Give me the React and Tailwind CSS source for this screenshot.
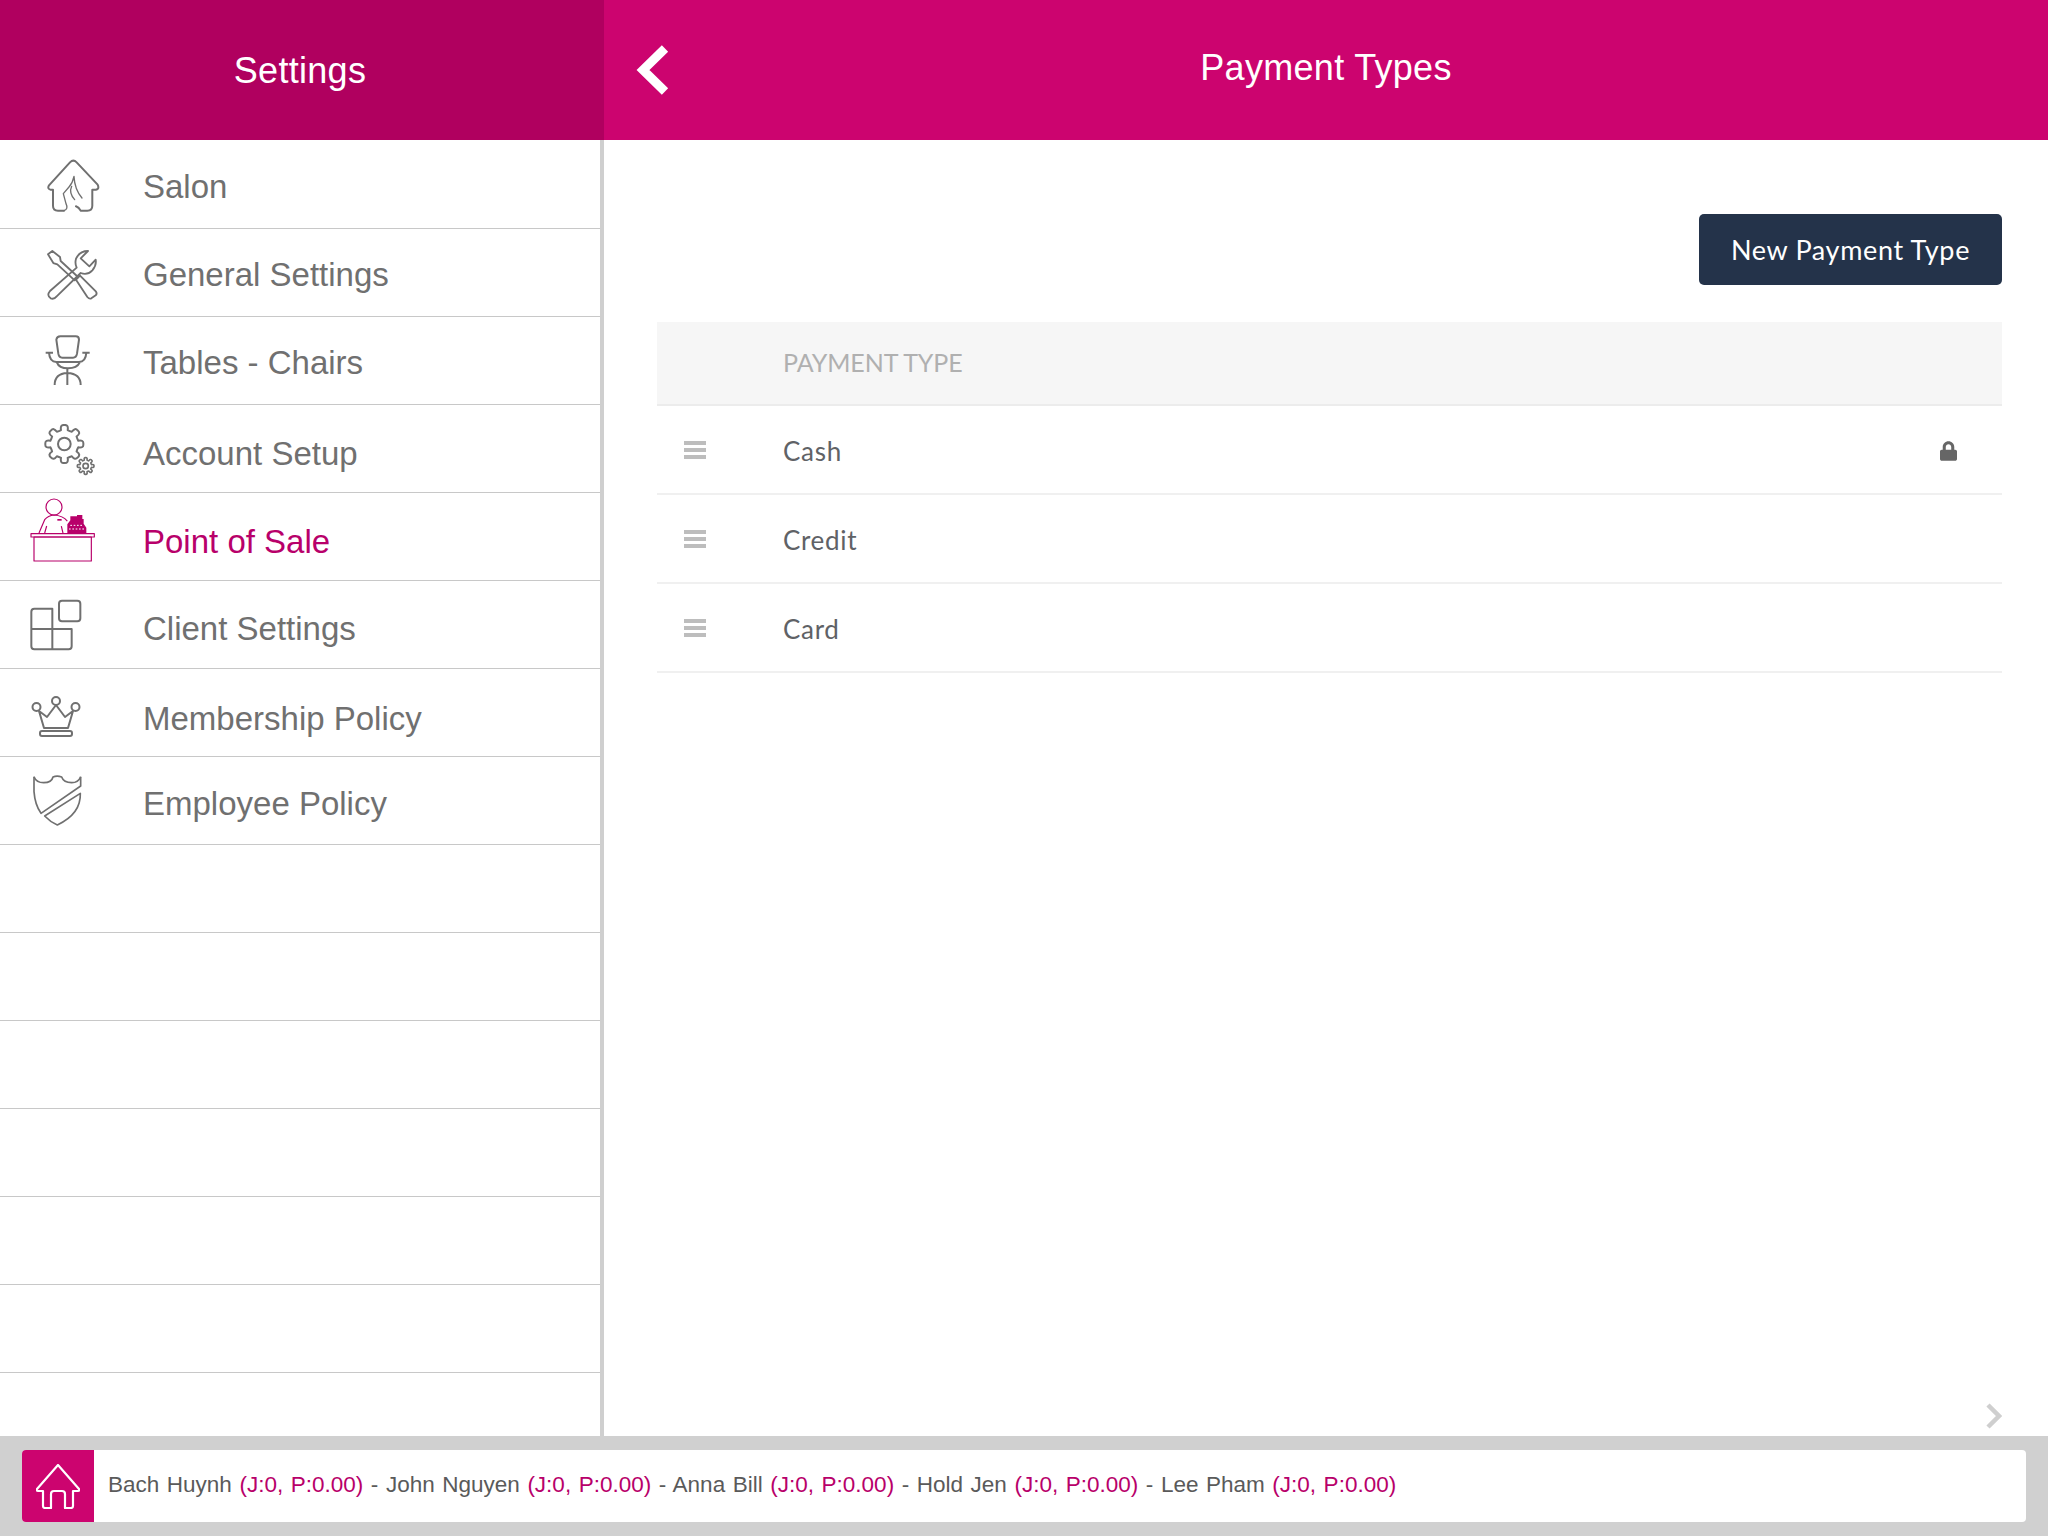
import React from "react";
import { FaLock } from "react-icons/fa";

function gearPath(cx, cy, ro, ri, teeth) {
  const step = (Math.PI * 2) / teeth;
  const pt = (i, r, t) => {
    const a = i * step - Math.PI / 2 + t * step;
    return `${(cx + r * Math.cos(a)).toFixed(1)} ${(cy + r * Math.sin(a)).toFixed(1)}`;
  };
  let d = `M${pt(0, ri, -0.3)}`;
  for (let i = 0; i < teeth; i++) {
    d += ` Q${pt(i, ro * 1.05, -0.28)} ${pt(i, ro, 0)}`;
    d += ` Q${pt(i, ro * 1.05, 0.28)} ${pt(i, ri, 0.3)}`;
    d += ` Q${pt(i, ri * 0.97, 0.5)} ${pt(i, ri, 0.7)}`;
  }
  return d + "Z";
}

const G = "#707070";
const P = "#b8006a";

const SalonIcon = () => (
  <svg viewBox="130 85 175 165" className="block w-[58.3px] h-[55px] ml-[44px] mt-[17.3px]" fill="none" stroke={G} strokeWidth="6" strokeLinejoin="round" strokeLinecap="round">
    <path d="M190 243H172Q157 243 157 228V180H150Q139 178 145 167L208 98Q218 88 228 98L291 165Q297 178 286 180H275V228Q275 243 260 243H240Q235 233 226 230" />
    <path d="M190 243Q204 238 196 222L188 192L205 172Q216 160 220 140Q222 180 244 205" strokeWidth="4" />
    <path d="M213 170Q204 190 222 210" strokeWidth="4" />
  </svg>
);
const ToolsIcon = () => (
  <svg viewBox="130 350 170 170" className="block w-[56.7px] h-[56.7px] ml-[44px] mt-[17.7px]" fill="none" stroke={G} strokeWidth="5.5" strokeLinejoin="round">
    <path d="M142 372L155 362L178 380L180 392L232 440L222 450L170 402L158 398Z" />
    <path d="M226 448L238 436L286 484Q290 490 285 495L272 504Q266 507 260 500Z" />
    <path d="M262 362Q237 362 226 385Q222 400 228 412L148 482Q137 495 150 504Q160 508 168 498L240 428Q260 436 275 420Q288 405 285 388L266 408L240 384Z" />
  </svg>
);
const ChairIcon = () => (
  <svg viewBox="130 605 150 170" className="block w-[50px] h-[56.7px] ml-[43.3px] mt-[14.7px]" fill="none" stroke={G} strokeWidth="6" strokeLinejoin="round">
    <path d="M170 628Q172 618 182 618H228Q238 618 238 628L232 670Q230 682 220 682H188Q178 682 176 670Z" />
    <path d="M138 667H160M248 667H270" />
    <path d="M148 667Q150 695 170 695H238Q258 695 260 667" />
    <path d="M172 697Q178 714 205 714Q232 714 240 697" />
    <path d="M203 714V764M165 764Q165 730 203 728Q243 730 243 764" />
  </svg>
);
const GearIcon = () => (
  <svg viewBox="125 -20 165 160" className="block w-[55px] h-[53.3px] ml-[41.7px] mt-[18.8px]" fill="none" stroke={G} strokeWidth="6" strokeLinejoin="round">
    <path d={gearPath(192, 40, 57, 43, 8)} />
    <circle cx="192" cy="40" r="19" />
    <path d={gearPath(256, 106, 25, 18, 8)} strokeWidth="5" />
    <circle cx="256" cy="106" r="8" strokeWidth="5" />
  </svg>
);
const PosIcon = () => (
  <svg viewBox="85 200 210 200" className="block w-[70px] h-[66.7px] ml-[28.3px] mt-[3.7px]" fill="none" stroke={P} strokeWidth="3.5" strokeLinejoin="round">
    <circle cx="163" cy="230" r="24" />
    <path d="M118 308L135 268Q145 256 163 254Q190 256 203 272" />
    <path d="M135 308L141 287M190 308L185 287" />
    <path d="M173 266H186V271H173Z" fill={P} stroke="none" />
    <path d="M203 310V282L212 270V258H232V254H248V266H252V280L260 292V310Z" fill={P} stroke="none" />
    <path d="M212 285H250M208 296H256" stroke="#ffffff" strokeWidth="3" strokeDasharray="5 5" />
    <rect x="94" y="310" width="190" height="10" />
    <rect x="103" y="320" width="172" height="72" />
  </svg>
);
const ClientIcon = () => (
  <svg viewBox="85 505 165 165" className="block w-[55px] h-[55px] ml-[28.3px] mt-[17.3px]" fill="none" stroke={G} strokeWidth="6" strokeLinejoin="round">
    <path d="M158 537H104Q95 537 95 546V598H158ZM95 598V650Q95 659 104 659H207Q216 659 216 650V598H158V659" />
    <rect x="178" y="513" width="64" height="62" rx="9" />
  </svg>
);
const CrownIcon = () => (
  <svg viewBox="30 695 52 45" className="block w-[52px] h-[45px] ml-[30px] mt-[26px]" fill="none" stroke={G} strokeWidth="2" strokeLinejoin="round">
    <circle cx="36.5" cy="707" r="4" />
    <circle cx="56" cy="701" r="4" />
    <circle cx="75.5" cy="707" r="4" />
    <path d="M39 711L44 728H68L73 711L65 717L56 705L47 717Z" />
    <rect x="40" y="731" width="32" height="5" rx="2" />
  </svg>
);
const ShieldIcon = () => (
  <svg viewBox="95 135 150 155" className="block w-[50px] h-[51.7px] ml-[31.7px] mt-[18px]" fill="none" stroke={G} strokeWidth="5" strokeLinejoin="round">
    <path d="M101 140Q108 158 130 158Q154 158 158 141Q170 136 184 141Q190 158 214 158Q234 158 241 140" />
    <path d="M101 140V185Q104 225 122 250L241 168V140" />
    <path d="M133 258L240 190Q242 252 171 285Q150 276 133 258Z" />
  </svg>
);

const menu = [
  { label: "Salon", Icon: SalonIcon, cls: "mt-[27px] text-[#707070]" },
  { label: "General Settings", Icon: ToolsIcon, cls: "mt-[27px] text-[#707070]" },
  { label: "Tables - Chairs", Icon: ChairIcon, cls: "mt-[27px] text-[#707070]" },
  { label: "Account Setup", Icon: GearIcon, cls: "mt-[30px] text-[#707070]" },
  { label: "Point of Sale", Icon: PosIcon, cls: "mt-[30px] text-[#b8006a]" },
  { label: "Client Settings", Icon: ClientIcon, cls: "mt-[29px] text-[#707070]" },
  { label: "Membership Policy", Icon: CrownIcon, cls: "mt-[31px] text-[#707070]" },
  { label: "Employee Policy", Icon: ShieldIcon, cls: "mt-[28px] text-[#707070]" },
];

const staff = ["Bach Huynh", "John Nguyen", "Anna Bill", "Hold Jen", "Lee Pham"];
const types = ["Cash", "Credit", "Card"];
const MULI = "font-['Lato','Open_Sans',sans-serif]";

export default function App() {
  return (
    <div className="w-[2048px] h-[1536px] flex flex-col overflow-hidden bg-white font-['Liberation_Sans',Arial,sans-serif]">
      <header className="h-[140px] flex shrink-0 text-white text-[36px] tracking-[0.3px]">
        <div className="w-[604px] bg-[#b0005f] flex items-center justify-center pt-[1px] pr-[4px]">
          <span className="leading-[40px]">Settings</span>
        </div>
        <div className="flex-1 bg-[#cc046f] flex items-center relative">
          <svg viewBox="0 0 34 50" className="absolute left-[31px] top-[45px] w-[34px] h-[50px]" fill="none" stroke="#ffffff" strokeWidth="9">
            <path d="M30 3.5L8 25L30 46.5" />
          </svg>
          <span className="flex-1 text-center leading-[40px] pb-[4px]">Payment Types</span>
        </div>
      </header>

      <div className="flex-1 flex min-h-0">
        <aside className="w-[604px] border-r-4 border-[#cfcfcf] pt-[1px] overflow-hidden shrink-0">
          {menu.map(({ label, Icon, cls }) => (
            <div key={label} className="h-[88px] border-b border-[#c8c8c8] flex items-start">
              <div className="w-[143px] shrink-0">
                <Icon />
              </div>
              <span className={`text-[33px] leading-[38px] ${cls}`}>{label}</span>
            </div>
          ))}
          {[0, 1, 2, 3, 4, 5].map((i) => (
            <div key={i} className="h-[88px] border-b border-[#c8c8c8]" />
          ))}
        </aside>

        <main className={`flex-1 flex flex-col pl-[53px] pr-[46px] ${MULI}`}>
          <div className="flex justify-end pt-[74px]">
            <button className="w-[303px] h-[71px] rounded-[5px] bg-[#24334a] text-white text-[27px] tracking-[0.65px] pt-[2px]">
              New Payment Type
            </button>
          </div>
          <div className="mt-[37px] h-[84px] bg-[#f6f6f6] border-b-2 border-[#ececec] flex items-center pl-[126px] text-[25px] text-[#b0b0b0] tracking-[-0.1px]">
            PAYMENT TYPE
          </div>
          {types.map((t, i) => (
            <div key={t} className="h-[89px] border-b-2 border-[#f0f0f0] flex items-center text-[26px] text-[#606266] tracking-[0.7px]">
              <div className="w-[126px] pl-[27px] shrink-0 flex flex-col gap-[3px]">
                <div className="w-[22px] h-[4px] bg-[#bdbdbd]" />
                <div className="w-[22px] h-[4px] bg-[#bdbdbd]" />
                <div className="w-[22px] h-[4px] bg-[#bdbdbd]" />
              </div>
              <span className="flex-1 pt-[3px]">{t}</span>
              {i === 0 && <FaLock className="w-[17px] h-[20px] mt-[2px] mr-[45px] text-[#666666]" />}
            </div>
          ))}
          <div className="flex-1 flex justify-end items-end pb-[7px] pr-0">
            <svg viewBox="0 0 16 26" className="w-[16px] h-[26px]" fill="none" stroke="#cfcfcf" strokeWidth="4.5">
              <path d="M2 2L13 13L2 24" />
            </svg>
          </div>
        </main>
      </div>

      <footer className="h-[100px] shrink-0 bg-[#d0d0d0] pt-[14px] pl-[22px] pr-[22px]">
        <div className="h-[72px] bg-white rounded-[4px] flex items-center overflow-hidden">
          <div className="w-[72px] h-full bg-[#cc046f] flex items-center justify-center shrink-0">
            <svg viewBox="0 0 44 45" className="w-[44px] h-[45px]" fill="none" stroke="#ffffff" strokeWidth="2.2" strokeLinejoin="round">
              <path d="M22 1L43 25Q44 27 42 27H37V42Q37 44 35 44H29V30Q29 27 26 27H18Q15 27 15 30V44H9Q7 44 7 42V27H2Q0 27 1 25Z" />
            </svg>
          </div>
          <div className="pl-[14px] pb-[2px] text-[22.5px] leading-[26px] [word-spacing:1.3px] whitespace-pre text-[#5a5a5a]">
            {staff.map((s, i) => (
              <span key={s}>
                {s} <span className="text-[#b8006a]">(J:0, P:0.00)</span>
                {i < staff.length - 1 ? " - " : ""}
              </span>
            ))}
          </div>
        </div>
      </footer>
    </div>
  );
}
